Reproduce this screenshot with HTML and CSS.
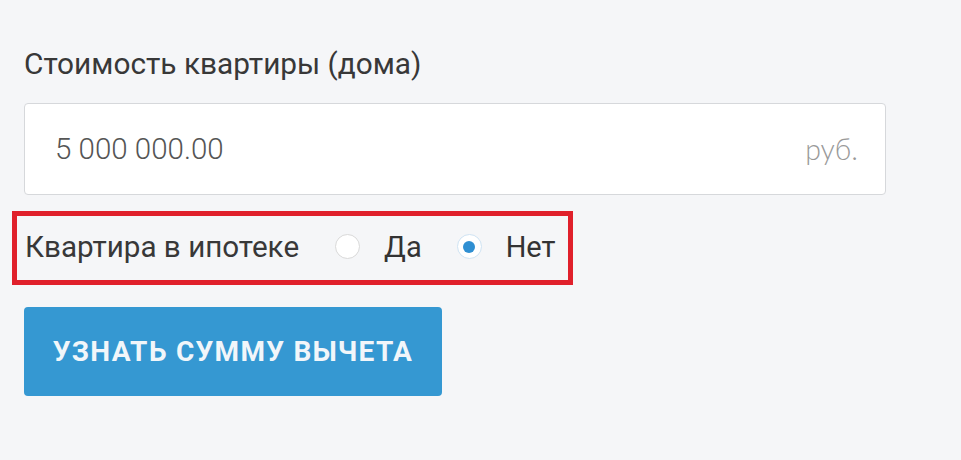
FILE: index.html
```html
<!DOCTYPE html>
<html lang="ru">
<head>
<meta charset="utf-8">
<link rel="stylesheet" href="styles.css">
</head>
<body>
<form class="form">
  <div class="label">Стоимость квартиры (дома)</div>
  <div class="field">
    <span class="value">5 000 000.00</span>
    <span class="unit">руб.</span>
  </div>
  <div class="highlight">
    <span class="row-label">Квартира в ипотеке</span>
    <span class="radio"></span>
    <span class="opt">Да</span>
    <span class="radio checked"></span>
    <span class="opt">Нет</span>
  </div>
  <button type="button" class="btn">УЗНАТЬ СУММУ ВЫЧЕТА</button>
</form>
</body>
</html>
```
FILE: styles.css
```css
html, body {
  margin: 0;
  padding: 0;
  background: #f5f6f8;
  height: 100%;
}
.form {
  display: flex;
  flex-direction: column;
  align-items: flex-start;
  padding: 49px 0 0 12px;
  font-family: Roboto, "Liberation Sans", sans-serif;
  color: #333;
}
.label {
  margin-left: 12px;
  font-size: 29.8px;
  line-height: 30px;
  height: 30px;
  color: #383838;
}
.field {
  margin: 24px 0 0 12px;
  box-sizing: border-box;
  width: 862px;
  height: 92px;
  background: #fff;
  border: 1px solid #d6d8db;
  border-radius: 4px;
  display: flex;
  align-items: center;
  justify-content: space-between;
  padding: 0 27px 0 30px;
}
.value {
  font-size: 29.5px;
  font-weight: 300;
  color: #555;
}
.unit {
  font-family: Lato, Roboto, sans-serif;
  font-size: 28.5px;
  font-weight: 300;
  color: #999;
}
.highlight {
  margin-top: 16px;
  box-sizing: border-box;
  height: 74px;
  width: 561px;
  border: 5px solid #e0202b;
  display: flex;
  align-items: center;
  padding: 0 0 3px 8px;
}
.row-label {
  font-size: 29.6px;
  color: #383838;
}
.radio {
  box-sizing: border-box;
  width: 25px;
  height: 25px;
  border-radius: 50%;
  border: 1px solid #d9d9d9;
  background: #fff;
  margin-left: 36px;
  display: flex;
  align-items: center;
  justify-content: center;
}
.radio.checked {
  border-color: #cfe3f3;
  margin-left: 35px;
}
.radio.checked::after {
  content: "";
  width: 12px;
  height: 12px;
  border-radius: 50%;
  background: #2f8fd2;
}
.opt {
  font-size: 29px;
  color: #333;
  margin-left: 24px;
}
.btn {
  margin: 22px 0 0 12px;
  width: 418px;
  height: 89px;
  border: none;
  border-radius: 4px;
  background: #3598d2;
  color: #f1f6fa;
  font-family: Roboto, "Liberation Sans", sans-serif;
  font-weight: 700;
  font-size: 28px;
  letter-spacing: 1.3px;
  padding: 0;
}
```
